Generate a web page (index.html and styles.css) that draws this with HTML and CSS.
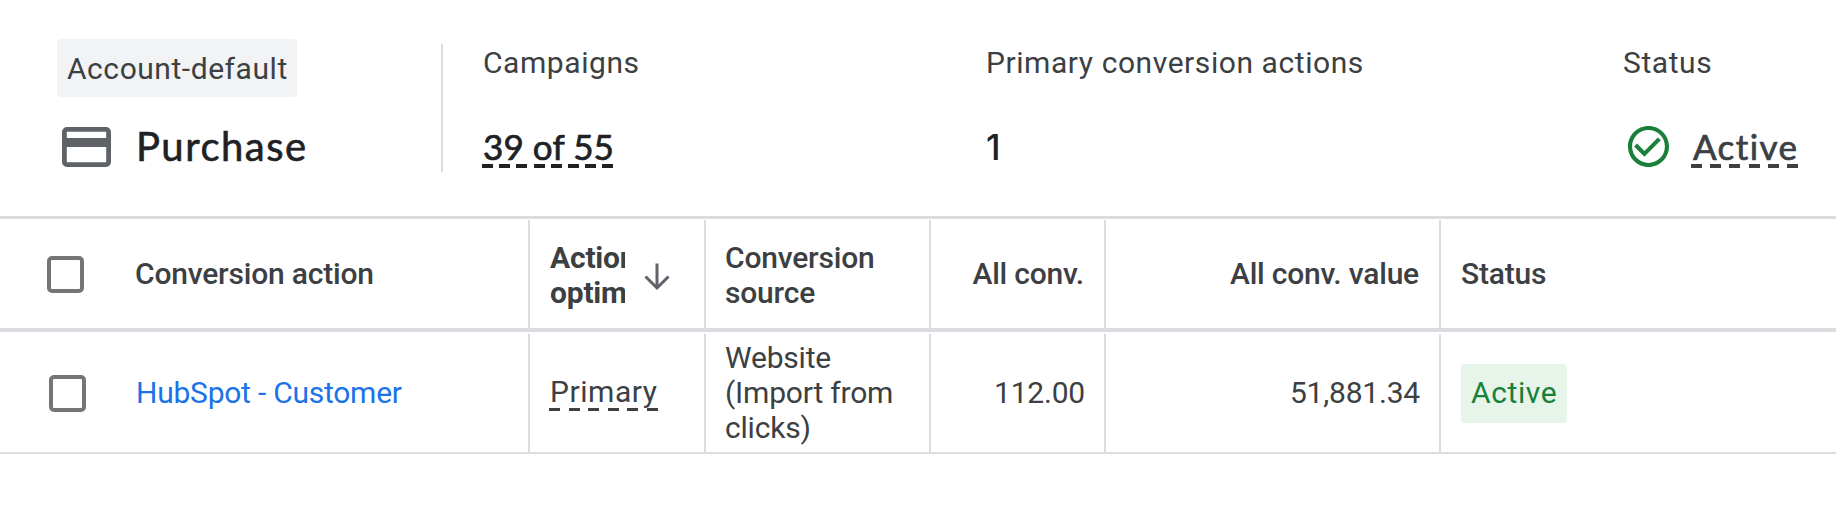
FILE: index.html
```
<!DOCTYPE html>
<html lang="en">
<head>
<meta charset="utf-8">
<title>Purchase conversion goal</title>
<link rel="stylesheet" href="styles.css">
</head>
<body>
<section class="summary">
  <div class="goal">
    <span class="chip chip-default">Account-default</span>
    <div class="goal-title">
      <svg class="card-icon" viewBox="0 0 49 40"><rect x="2.4" y="2.4" width="44.2" height="35.2" rx="2.6" fill="none" stroke="#5f6368" stroke-width="4.8"/><rect x="2" y="11" width="45" height="9" fill="#5f6368"/></svg>
      <h1 class="goal-name">Purchase</h1>
    </div>
  </div>
  <div class="stat stat-campaigns">
    <span class="label">Campaigns</span>
    <span class="value value-campaigns">39 of 55</span>
  </div>
  <div class="stat stat-actions">
    <span class="label">Primary conversion actions</span>
    <span class="value value-one">1</span>
  </div>
  <div class="stat stat-status">
    <span class="label">Status</span>
    <div class="status-line">
      <svg class="check-icon" viewBox="2 2 20 20"><path fill="#188038" d="M16.59 7.58L10 14.17l-3.59-3.58L5 12l5 5 8-8zM12 2C6.48 2 2 6.48 2 12s4.480 10 10 10 10-4.480 10-10S17.520 2 12 2zm0 18c-4.420 0-8-3.580-8-8s3.580-8 8-8 8 3.580 8 8-3.580 8-8 8z"/></svg>
      <span class="value value-active">Active</span>
    </div>
  </div>
</section>
<section class="table">
  <div class="row head">
    <div class="cell first"><span class="checkbox"></span><span>Conversion action</span></div>
    <div class="cell sorted"><span class="clip">Action<br>optimization</span>
      <svg class="arrow" viewBox="0 0 26 28"><path d="M13 0.500V25M1.500 13.500L13 25L24.500 13.500" fill="none" stroke="#5f6368" stroke-width="3"/></svg></div>
    <div class="cell"><span class="h-source">Conversion<br>source</span></div>
    <div class="cell num"><span>All conv.</span></div>
    <div class="cell num"><span>All conv. value</span></div>
    <div class="cell"><span>Status</span></div>
  </div>
  <div class="row body">
    <div class="cell first"><span class="checkbox"></span><a class="link">HubSpot - Customer</a></div>
    <div class="cell"><span class="primary">Primary</span></div>
    <div class="cell"><span class="source">Website<br>(Import from<br>clicks)</span></div>
    <div class="cell num"><span>112.00</span></div>
    <div class="cell num"><span>51,881.34</span></div>
    <div class="cell"><span class="chip chip-active">Active</span></div>
  </div>
</section>
</body>
</html>
```
FILE: styles.css
```
* { box-sizing: border-box; }
body {
  margin: 0;
  height: 518px;
  overflow: hidden;
  background: #fff;
  color: #3c4043;
  font: 400 30px/35px Roboto, "Liberation Sans", sans-serif;
}
svg { display: block; flex: none; }
span, a { white-space: nowrap; }
.summary {
  display: grid;
  grid-template-columns: 441px 545px 637px 1fr;
  height: 219px;
  border-bottom: 3px solid #dadce0;
}
.goal {
  display: flex;
  flex-direction: column;
  align-items: flex-start;
  padding: 39px 0 0 57px;
}
.chip {
  display: flex;
  align-items: center;
  height: 58px;
  padding: 0 10px;
  border-radius: 4px;
}
.chip-default {
  width: 240px;
  padding-top: 1px;
  background: #f1f3f4;
  letter-spacing: 0.55px;
}
.goal-title {
  display: flex;
  align-items: center;
  margin-top: 25px;
  padding-left: 5px;
  height: 50px;
}
.card-icon { width: 49px; height: 40px; }
.goal-name {
  margin: -3px 0 0 25px;
  font: 400 40px/48px Lato, sans-serif;
  letter-spacing: 1.5px;
  color: #202124;
  -webkit-text-stroke: 0.6px #202124;
}
.stat {
  display: flex;
  flex-direction: column;
  align-items: flex-start;
  padding-top: 45px;
}
.stat-campaigns {
  margin: 44px 0;
  padding: 1px 0 0 40px;
  border-left: 2px solid #dadce0;
}
.label { letter-spacing: 0.57px; }
.value {
  height: 41px;
  margin-top: 47px;
  font: 400 35px/39px Lato, sans-serif;
  color: #202124;
  -webkit-text-stroke: 0.7px currentColor;
}
.value-campaigns {
  width: 132px;
  margin-left: -1px;
  padding-left: 1px;
  letter-spacing: 0.1px;
  background: repeating-linear-gradient(90deg, #202124 0 11px, transparent 11px 17.2px) 0 100% / 132px 4px no-repeat;
}
.value-one { font: 500 35px/41px Inter, sans-serif; -webkit-text-stroke: 0; }
.status-line { display: flex; padding-left: 5px; margin-top: 46px; }
.check-icon { width: 41px; height: 41px; }
.value-active {
  width: 107px;
  margin: 1px 0 0 22px;
  padding-left: 2px;
  color: #3c4043;
  font-variant-ligatures: none;
  letter-spacing: 1.4px;
  background: repeating-linear-gradient(90deg, #3c4043 0 11px, transparent 11px 19.2px) 0 100% / 107px 4px no-repeat;
}
.row {
  display: grid;
  grid-template-columns: 530px 176px 225px 175px 335px 1fr;
  letter-spacing: -0.2px;
}
.head {
  height: 113px;
  border-bottom: 4px solid #dadce0;
  font-weight: 500;
}
.body {
  height: 122px;
  padding-top: 2px;
  border-bottom: 2px solid #dadce0;
}
.cell {
  display: flex;
  align-items: center;
  padding: 0 0 2px 20px;
  border-right: 2px solid #dadce0;
}
.head .cell { margin-top: 1px; }
.cell:last-child { border-right: 0; }
.num { justify-content: flex-end; padding: 0 19px 2px 0; }
.head .num { padding-right: 20px; }
.first { padding-left: 47px; }
.checkbox {
  flex: none;
  width: 37px;
  height: 37px;
  margin: 3px 51px 0 0;
  border: 4px solid #757575;
  border-radius: 5px;
}
.body .checkbox { margin: 2px 50px 0 2px; }
.clip {
  width: 75px;
  margin-top: 3px;
  overflow: hidden;
  font-weight: 700;
  letter-spacing: -0.2px;
}
.h-source { margin: 3px 0 0 -1px; }
.source { margin-left: -1px; }
.arrow { width: 26px; height: 28px; margin: 7px 0 0 19px; }
.link { color: #1a73e8; letter-spacing: -0.24px; }
.primary {
  width: 110px;
  height: 36px;
  margin: 2px 0 0 -1px;
  padding-left: 1px;
  line-height: 33px;
  letter-spacing: 0.55px;
  background: repeating-linear-gradient(90deg, #3c4043 0 11px, transparent 11px 19.6px) 0 100% / 110px 3px no-repeat;
}
.chip-active {
  width: 106px;
  height: 59px;
  margin-top: 2px;
  padding-bottom: 2px;
  background: #e6f4ea;
  color: #188038;
  letter-spacing: 0.6px;
}
```
